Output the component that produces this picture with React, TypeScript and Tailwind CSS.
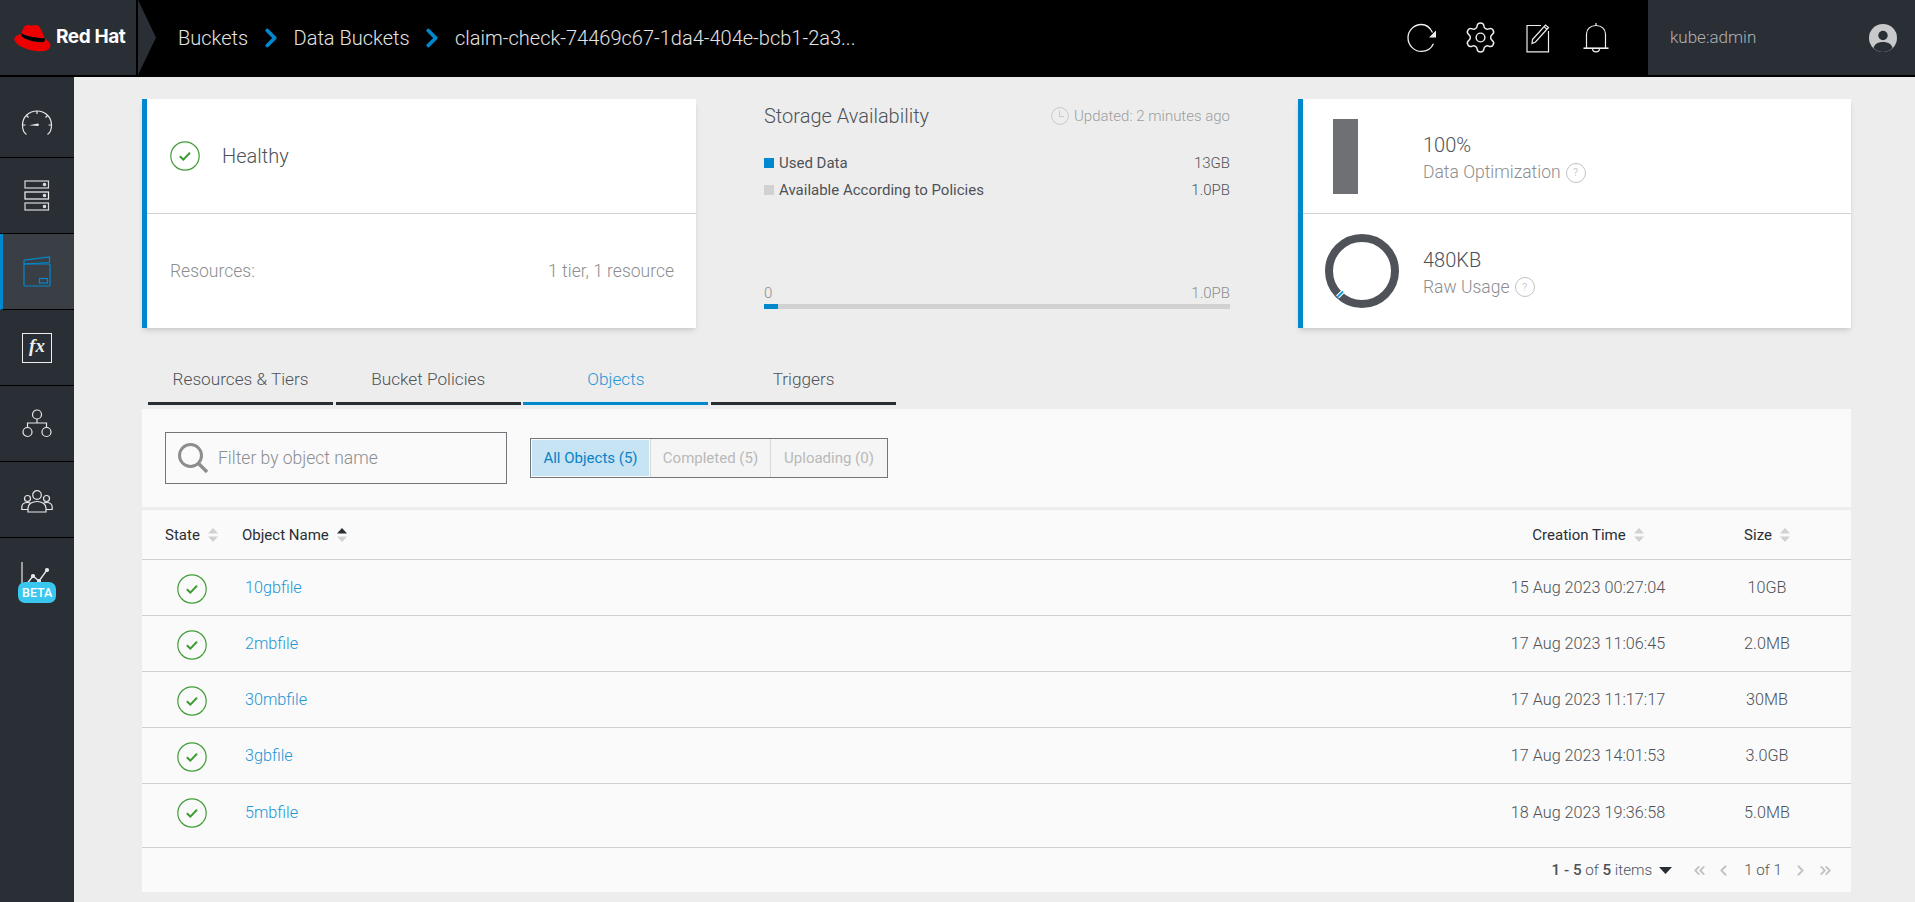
import React from 'react';
import { ChevronRight, ChevronLeft, ChevronsLeft, ChevronsRight, Settings } from 'lucide-react';

const RedHatLogo = () => (
  <svg width="37" height="28" viewBox="0 0 37 28" className="shrink-0">
    <path d="M7.5 9.5C8.5 5.5 9.5 2 12.5 1.2C15 .6 16.5 2 18.5 1.6C20.5 1.1 23 .3 25 2.6C27.3 5.5 29.5 10.5 30.6 14.5C27 14.5 13 12.5 7.5 9.5Z" fill="#ee0000" />
    <path d="M7.5 9.5C7 10.2 6.9 11.2 8 12.6C11 15.3 22 18.5 28 18C31 17.8 31.3 16 30.6 14.2C25 14.2 13 12.8 7.5 9.5Z" fill="#000" />
    <path d="M7 9.9C3.5 10.7 .3 12.5 .3 15C.3 19.8 10 26 23.5 27.2C31.5 27.8 36.5 25.5 36.5 21.5C36.5 18.4 33.5 16 30.8 14.4C31.5 16.5 31 18 28 18.2C21 18.8 10.5 15.5 7.8 12.8C6.8 11.6 6.6 10.7 7 9.9Z" fill="#ee0000" />
  </svg>
);

const GaugeIcon = () => (
  <svg width="32" height="28" viewBox="0 0 32 28" fill="none" stroke="#e8e8e8" strokeWidth="1.2">
    <path d="M5.5 25.5C3 24 1.5 20 1.5 16C1.5 8 8 2 16 2S30.5 8 30.5 16C30.5 20 29 24 26.5 25.5" />
    <path d="M16 2V5M5.5 6.5L7.5 8.5M26.5 6.5L24.5 8.5M1.5 16H4.5M30.5 16H27.5" />
    <path d="M8 16.2L17 14.5C18.2 14.5 18.2 17 17 17Z" fill="#e8e8e8" stroke="none" />
  </svg>
);

const ServerIcon = () => (
  <svg width="26" height="31" viewBox="0 0 26 31" fill="none" stroke="#d9d9d9" strokeWidth="1.2">
    <rect x="1" y="1" width="23.5" height="7" />
    <rect x="1" y="12" width="23.5" height="7" stroke="#f5f5f5" />
    <rect x="1" y="23" width="23.5" height="7" />
    <circle cx="20.5" cy="4.5" r="1.2" fill="#d9d9d9" />
    <circle cx="20.5" cy="15.5" r="1.2" fill="#d9d9d9" />
    <circle cx="20.5" cy="26.5" r="1.2" fill="#d9d9d9" />
  </svg>
);

const BucketIcon = () => (
  <svg width="28" height="31" viewBox="0 0 28 31" fill="none" stroke="#0088ce" strokeWidth="1.2">
    <path d="M1 4.2L26.5 1V6.5L1 8" />
    <path d="M1 4.2V29C1 29.7 1.4 30 2 30H26C26.6 30 27 29.7 27 29V9C27 8.3 26.6 8 26 8H1" />
    <rect x="16.5" y="22.5" width="8" height="4.5" />
  </svg>
);

const TreeIcon = () => (
  <svg width="30" height="29" viewBox="0 0 30 29" fill="none" stroke="#e8e8e8" strokeWidth="1.2">
    <circle cx="15" cy="5.5" r="4.5" />
    <circle cx="5.5" cy="23" r="4.5" />
    <circle cx="24.5" cy="23" r="4.5" />
    <path d="M15 10V14M5.5 18.5V14H24.5V18.5" />
  </svg>
);

const UsersIcon = () => (
  <svg width="32" height="23" viewBox="0 0 32 23" fill="none" stroke="#e8e8e8" strokeWidth="1.2" className="mt-[3px]">
    <circle cx="16" cy="5" r="4.3" />
    <path d="M7 22V18C7 14 11 11.5 16 11.5S25 14 25 18V22Z" />
    <circle cx="6.5" cy="8.5" r="3" />
    <circle cx="25.5" cy="8.5" r="3" />
    <path d="M7 19.5H.8V17C.8 14.5 3 12.5 6.5 12.5C7.5 12.5 8.3 12.6 9 12.9M25 19.5H31.2V17C31.2 14.5 29 12.5 25.5 12.5C24.5 12.5 23.7 12.6 23 12.9" />
  </svg>
);

const ChartIcon = () => (
  <svg width="30" height="26" viewBox="0 0 30 26" fill="none" stroke="#e8e8e8" strokeWidth="1.2">
    <path d="M1 1V26" />
    <path d="M5 24L12 15L18 20L26 9" strokeWidth="1.4" />
    <circle cx="12" cy="15" r="1.5" fill="#e8e8e8" />
    <circle cx="18" cy="20" r="1.5" fill="#e8e8e8" />
    <circle cx="26" cy="9" r="1.5" fill="#e8e8e8" />
  </svg>
);

const RefreshIcon = () => (
  <svg width="30" height="30" viewBox="0 0 30 30" fill="none">
    <path d="M25.5 9.5C23 4.5 18.5 1.5 14.5 1.5C7 1.5 1 7.5 1 14.8S7 28.4 14.5 28.4C20 28.4 24.5 25.2 26.4 20.8" stroke="#f0f0f0" strokeWidth="1.3" />
    <path d="M29 7.5V14.5H22Z" fill="#f0f0f0" />
  </svg>
);

const NoteIcon = () => (
  <svg width="24" height="30" viewBox="0 0 24 30" fill="none" stroke="#eeeeee" strokeWidth="1.2">
    <path d="M15 2.5H1V28.8H22.5V8" />
    <path d="M6.5 16.5L19.5 2L22.5 4.5L9.5 19L6 20.5Z" />
    <path d="M18 3.6L21 6.2" />
  </svg>
);

const BellIcon = () => (
  <svg width="26" height="31" viewBox="0 0 26 31" fill="none" stroke="#eeeeee" strokeWidth="1.2">
    <path d="M13 1V3.5" />
    <path d="M3.5 26V12C3.5 7 7.5 3.5 13 3.5S22.5 7 22.5 12V26" />
    <path d="M.5 26.2H25.5" strokeWidth="1.6" />
    <path d="M9.5 26.5C9.5 28.5 11 29.8 13 29.8S16.5 28.5 16.5 26.5" />
  </svg>
);

const AvatarIcon = () => (
  <svg width="28" height="28" viewBox="0 0 28 28">
    <circle cx="14" cy="14" r="14" fill="#c8c9ca" />
    <circle cx="14" cy="11.5" r="4.7" fill="#2a2f36" />
    <path d="M4.5 24C5.5 20 9 18 14 18S22.5 20 23.5 24C21 26.5 17.5 28 14 28S7 26.5 4.5 24Z" fill="#2a2f36" />
  </svg>
);

const CheckCircle = () => (
  <svg width="30" height="30" viewBox="0 0 30 30" fill="none" className="shrink-0">
    <circle cx="15" cy="15" r="14.2" stroke="#3f9c35" strokeWidth="1.2" />
    <path d="M9.8 15.3L13.3 18.6L20 11.8" stroke="#3f9c35" strokeWidth="2" />
  </svg>
);

const SearchIcon = () => (
  <svg width="30" height="30" viewBox="0 0 30 30" fill="none" stroke="#8b8d8f" className="shrink-0">
    <circle cx="12.5" cy="12.5" r="11" strokeWidth="3" />
    <path d="M20.5 20.5L29 29" strokeWidth="3.4" />
  </svg>
);

const SortIcon = ({ active }: { active?: boolean }) => (
  <svg width="10" height="14" viewBox="0 0 10 14" className="ml-2 shrink-0">
    <path d="M5 0L10 5.5H0Z" fill={active ? '#292e34' : '#d1d1d1'} />
    <path d="M5 14L10 8.5H0Z" fill="#d1d1d1" />
  </svg>
);

const HelpIcon = () => (
  <span className="ml-[5px] inline-flex h-5 w-5 items-center justify-center rounded-full border border-[#c2c2c2] text-[11px] text-[#b5b5b5]">
    ?
  </span>
);

const ClockIcon = () => (
  <svg width="18" height="18" viewBox="0 0 18 18" fill="none" stroke="#c9c9c9" strokeWidth="1">
    <circle cx="9" cy="9" r="8.4" />
    <path d="M8.5 3.5V9.5H13" />
  </svg>
);

const navItems = [
  { icon: <GaugeIcon />, cls: 'h-[81px] pt-[12px] border-b' },
  { icon: <ServerIcon />, cls: 'h-[76px] border-b' },
  { icon: <BucketIcon />, cls: 'h-[76px] border-b border-l-[3px] border-l-[#0088ce] bg-[#3a3f46] pr-[3px]' },
  {
    icon: (
      <span className="flex h-[30px] w-[30px] items-center justify-center border border-[#eeeeee] pb-[2px] text-[19px] font-bold italic text-[#eeeeee] [font-family:'Liberation_Serif',serif]">
        fx
      </span>
    ),
    cls: 'h-[76px] border-b',
  },
  { icon: <TreeIcon />, cls: 'h-[76px] border-b' },
  { icon: <UsersIcon />, cls: 'h-[76px] border-b' },
  {
    icon: (
      <div className="relative h-[30px] w-[38px] pl-[3px]">
        <ChartIcon />
        <span className="absolute left-0 top-[21px] rounded-[7px] bg-[#39c7ef] px-[4px] py-[2px] text-[12.5px] font-medium leading-[17px] text-white">
          BETA
        </span>
      </div>
    ),
    cls: 'h-[76px]',
  },
];

const tabs = ['Resources & Tiers', 'Bucket Policies', 'Objects', 'Triggers'];

const objects = [
  { name: '10gbfile', created: '15 Aug 2023 00:27:04', size: '10GB' },
  { name: '2mbfile', created: '17 Aug 2023 11:06:45', size: '2.0MB' },
  { name: '30mbfile', created: '17 Aug 2023 11:17:17', size: '30MB' },
  { name: '3gbfile', created: '17 Aug 2023 14:01:53', size: '3.0GB' },
  { name: '5mbfile', created: '18 Aug 2023 19:36:58', size: '5.0MB' },
];

export default function App() {
  return (
    <div className="flex h-screen flex-col overflow-hidden bg-[#ededed] font-light text-[#4d5258] [font-family:Roboto,sans-serif]">
      <header className="flex h-[77px] shrink-0 border-b-2 border-black bg-black">
        <div className="relative flex w-[137px] items-center gap-[5px] border-r border-black bg-[#2a2f36] pl-[14px]">
          <RedHatLogo />
          <span className="whitespace-nowrap text-[19px] font-bold tracking-[-0.4px] text-white [font-family:Inter,sans-serif]">
            Red Hat
          </span>
          <div className="absolute left-[138px] top-0 h-[75px] w-[18px] bg-[#2a2f36] [clip-path:polygon(0_0,100%_50%,0_100%)]" />
        </div>
        <nav className="ml-[41px] flex items-center text-[20px] text-[#e4e4e4]">
          <span>Buckets</span>
          <ChevronRight size={30} strokeWidth={3} className="mx-[7.75px] text-[#0088ce]" />
          <span>Data Buckets</span>
          <ChevronRight size={30} strokeWidth={3} className="mx-[7.75px] text-[#0088ce]" />
          <span>claim-check-74469c67-1da4-404e-bcb1-2a3...</span>
        </nav>
        <div className="ml-auto flex items-center">
          <div className="flex w-[58px] justify-center"><RefreshIcon /></div>
          <div className="flex w-[58px] justify-center"><Settings size={35} strokeWidth={1} className="text-[#eeeeee]" /></div>
          <div className="flex w-[58px] justify-center"><NoteIcon /></div>
          <div className="flex w-[58px] justify-center"><BellIcon /></div>
          <div className="ml-[23px] flex h-full w-[267px] items-center justify-between bg-[#2a2f36] pl-[22px] pr-[18px] text-[17px] text-[#b0b1b3]">
            <span>kube:admin</span>
            <AvatarIcon />
          </div>
        </div>
      </header>

      <div className="flex min-h-0 flex-1">
        <aside className="w-[74px] shrink-0 bg-[#2a2f36]">
          {navItems.map((item, i) => (
            <div key={i} className={`flex items-center justify-center border-black ${item.cls}`}>
              {item.icon}
            </div>
          ))}
        </aside>

        <main className="flex min-w-0 flex-1 flex-col pl-[68px] pr-[64px] pt-[22px]">
          <div className="flex h-[229px] shrink-0 justify-between">
            <section className="flex w-[554px] flex-col border-l-[5px] border-[#0088ce] bg-white shadow-md">
              <div className="flex h-[115px] items-center gap-[22px] border-b border-[#d1d1d1] pl-[23px] text-[20px]">
                <CheckCircle />
                <span>Healthy</span>
              </div>
              <div className="flex flex-1 items-center justify-between pl-[23px] pr-[22px] text-[17.5px] text-[#8b8d8f]">
                <span>Resources:</span>
                <span>1 tier, 1 resource</span>
              </div>
            </section>

            <section className="flex w-[466px] flex-col">
              <div className="mt-[2px] flex items-center justify-between">
                <h2 className="text-[20px]">Storage Availability</h2>
                <div className="flex items-center gap-[5px] text-[15px] text-[#9c9e9f]">
                  <ClockIcon />
                  <span>Updated: 2 minutes ago</span>
                </div>
              </div>
              <div className="mt-[21px] flex flex-col gap-[4px] text-[15px]">
                <div className="flex items-center">
                  <span className="mr-[5px] h-[10px] w-[10px] bg-[#0088ce]" />
                  <span className="font-normal">Used Data</span>
                  <span className="ml-auto">13GB</span>
                </div>
                <div className="flex items-center">
                  <span className="mr-[5px] h-[10px] w-[10px] bg-[#d1d1d1]" />
                  <span className="font-normal">Available According to Policies</span>
                  <span className="ml-auto">1.0PB</span>
                </div>
              </div>
              <div className="mt-[82px] flex justify-between text-[15px] leading-[20px] text-[#8b8d8f]">
                <span>0</span>
                <span>1.0PB</span>
              </div>
              <div className="mt-[1px] h-[5px] bg-[#d1d1d1]">
                <div className="h-full w-[14px] bg-[#0088ce]" />
              </div>
            </section>

            <section className="flex w-[553px] flex-col border-l-[5px] border-[#0088ce] bg-white shadow-md">
              <div className="flex h-[115px] items-center border-b border-[#d1d1d1]">
                <div className="ml-[30px] mr-[65px] h-[75px] w-[25px] bg-[#6e7074]" />
                <div className="pt-[6px]">
                  <div className="text-[20px] leading-[27px]">100%</div>
                  <div className="flex items-center text-[17.5px] leading-[27px] text-[#8b8d8f]">
                    Data Optimization
                    <HelpIcon />
                  </div>
                </div>
              </div>
              <div className="flex flex-1 items-center">
                <svg width="74" height="74" viewBox="0 0 74 74" fill="none" className="ml-[22px] mr-[24px]">
                  <circle cx="37" cy="37" r="33" stroke="#4f5359" strokeWidth="8" />
                  <path d="M12.5 63L18 57.5" stroke="#ffffff" strokeWidth="4" />
                  <path d="M12.5 63L18 57.5" stroke="#0a9be0" strokeWidth="2" />
                </svg>
                <div className="pt-[5px]">
                  <div className="text-[20px] leading-[27px]">480KB</div>
                  <div className="flex items-center text-[17.5px] leading-[27px] text-[#8b8d8f]">
                    Raw Usage
                    <HelpIcon />
                  </div>
                </div>
              </div>
            </section>
          </div>

          <div className="ml-[6px] mt-[27px] flex shrink-0 gap-[2.7px]">
            {tabs.map((tab) => (
              <div
                key={tab}
                className={`flex h-[50px] w-[185px] items-center justify-center border-b-[3px] pt-[2px] text-[17.2px] ${
                  tab === 'Objects' ? 'border-[#0088ce] text-[#2296d6]' : 'border-[#292e34] text-[#4d5258]'
                }`}
              >
                {tab}
              </div>
            ))}
          </div>

          <section className="mt-[4px] flex h-[483px] shrink-0 flex-col bg-[#fafafa]">
            <div className="flex h-[101px] shrink-0 items-center border-b-[3px] border-[#ededed] pl-[23px]">
              <label className="flex h-[52px] w-[342px] items-center border border-[#72767b] pl-[12px]">
                <SearchIcon />
                <input
                  placeholder="Filter by object name"
                  className="ml-[10px] w-[260px] bg-transparent text-[17.5px] font-light outline-none placeholder:text-[#8b8d8f]"
                />
              </label>
              <div className="ml-[23px] flex h-[40px] w-[358px] border border-[#72767b] text-[15px]">
                <div className="m-px flex w-[117px] items-center justify-center bg-[#c6e4f4] font-normal text-[#0a82c5]">
                  All Objects (5)
                </div>
                <div className="flex w-[121px] items-center justify-center border-x border-[#d8d8d8] bg-[#f5f5f5] font-normal text-[#b9b9b9]">
                  Completed (5)
                </div>
                <div className="flex flex-1 items-center justify-center bg-[#f5f5f5] font-normal text-[#b9b9b9]">
                  Uploading (0)
                </div>
              </div>
            </div>

            <div className="grid h-[50px] shrink-0 grid-cols-[100px_1fr_200px_158px] items-center border-b border-[#d1d1d1] pr-[5px] pt-[1px] text-[15px] font-normal text-[#292e34]">
              <div className="flex items-center pl-[23px]">State<SortIcon /></div>
              <div className="flex items-center">Object Name<SortIcon active /></div>
              <div className="flex items-center justify-center">Creation Time<SortIcon /></div>
              <div className="flex items-center justify-center">Size<SortIcon /></div>
            </div>

            {objects.map((row, i) => (
              <div
                key={row.name}
                className={`grid shrink-0 grid-cols-[100px_1fr_200px_158px] items-center border-b border-[#d1d1d1] pr-[5px] pt-[2px] text-[16.2px] ${
                  i === objects.length - 1 ? 'h-[64px] pb-[7px]' : 'h-[56px]'
                }`}
              >
                <div className="pl-[35px]"><CheckCircle /></div>
                <a className="pl-[3px] text-[#2296d6]">{row.name}</a>
                <div className="text-center">{row.created}</div>
                <div className="text-center">{row.size}</div>
              </div>
            ))}

            <div className="flex flex-1 items-center justify-end pr-[17px] pt-[1px] text-[15.2px]">
              <span><b className="font-medium">1 - 5</b> of <b className="font-medium">5</b> items</span>
              <svg width="13" height="7" viewBox="0 0 13 7" className="ml-[7px]"><path d="M0 0H13L6.5 7Z" fill="#292e34" /></svg>
              <ChevronsLeft size={17} strokeWidth={2.5} className="ml-[19px] text-[#c2c2c2]" />
              <ChevronLeft size={17} strokeWidth={2.5} className="ml-[7px] text-[#c2c2c2]" />
              <span className="ml-[12px] mr-[10px]">1 of 1</span>
              <ChevronRight size={17} strokeWidth={2.5} className="text-[#c2c2c2]" />
              <ChevronsRight size={17} strokeWidth={2.5} className="ml-[8px] text-[#c2c2c2]" />
            </div>
          </section>
        </main>
      </div>
    </div>
  );
}
